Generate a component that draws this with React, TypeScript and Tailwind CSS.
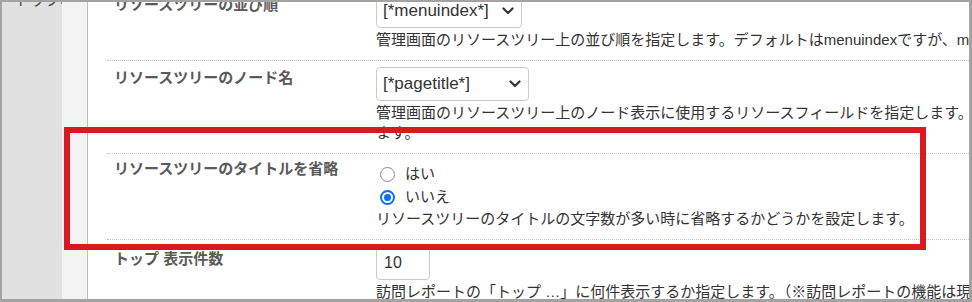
import React from 'react';

const jp = "[font-family:'Liberation_Sans','Noto_Sans_CJK_JP',sans-serif]";

const Chevron: React.FC = () => (
    <svg width="12" height="8" viewBox="0 0 12 8" fill="none" className="shrink-0">
        <path d="M1.5 1.5l4.5 4.5 4.5-4.5" stroke="#333" strokeWidth="2.2" strokeLinecap="round" strokeLinejoin="round" />
    </svg>
);

const Select: React.FC<{ value: string; width: string }> = ({ value, width }) => (
    <div className={`${width} h-[34px] flex items-center justify-between pl-[6px] pr-[7px] border border-[#cacaca] rounded-[4px] bg-white text-[17px] text-[#333]`}>
        <span>{value}</span>
        <Chevron />
    </div>
);

const Radio: React.FC<{ checked?: boolean; label: string }> = ({ checked, label }) => (
    <div className="h-[23px] flex items-center gap-[10px] pl-[4px]">
        {checked ? (
            <span className="w-[15px] h-[15px] rounded-full border-2 border-[#0b6ff0] p-[2px] bg-white">
                <span className="block w-full h-full rounded-full bg-[#0b6ff0]" />
            </span>
        ) : (
            <span className="w-[15px] h-[15px] rounded-full border-[1.5px] border-[#8a8a8a] bg-white" />
        )}
        <span className="text-[15px] text-[#333]">{label}</span>
    </div>
);

const Row: React.FC<{ label: string; children: React.ReactNode }> = ({ label, children }) => (
    <div className="flex pl-[7px] pt-[6px] pb-[10px] border-b border-dotted border-[#c8c8c8]">
        <div className="w-[262px] shrink-0 pt-[1px] text-[15px] leading-[20px] font-bold text-[#5a5a5a]">{label}</div>
        <div className="flex flex-col">{children}</div>
    </div>
);

const Desc: React.FC<{ children: React.ReactNode }> = ({ children }) => (
    <p className="mt-[2px] text-[15px] leading-[20px] text-[#333] whitespace-nowrap">{children}</p>
);

export default function App() {
    return (
        <div className={`relative w-[972px] h-[302px] overflow-hidden bg-white border-t-2 border-l-2 border-r-[3px] border-b-[3px] border-[#a3a3a3] ${jp}`}>
            <div className="flex h-full">
                {/* Sidebar */}
                <div className="w-[60px] shrink-0 bg-[#e1e1e1] overflow-hidden">
                    <div className="-mt-[12px] pl-[13px] text-[15px] leading-[20px] text-[#444] whitespace-nowrap">トップポータル</div>
                </div>
                <div className="w-[26px] shrink-0 bg-[#f3f3f3] border-r border-[#bcbcbc]" />

                {/* Settings */}
                <div className="flex-1 min-w-0 overflow-hidden">
                    <div className="ml-[19px] w-[1100px] -mt-[14px]">
                        <Row label="リソースツリーの並び順">
                            <Select value="[*menuindex*]" width="w-[146px]" />
                            <Desc>管理画面のリソースツリー上の並び順を指定します。デフォルトはmenuindexですが、menutitleなども指定できます。</Desc>
                        </Row>
                        <Row label="リソースツリーのノード名">
                            <Select value="[*pagetitle*]" width="w-[153px]" />
                            <Desc>管理画面のリソースツリー上のノード表示に使用するリソースフィールドを指定します。任意のフィールドを指定でき</Desc>
                            <p className="text-[15px] leading-[20px] text-[#333]">ます。</p>
                        </Row>
                        <div className="flex pl-[7px] pt-[5px] pb-[10px] border-b border-dotted border-[#c8c8c8]">
                            <div className="w-[262px] shrink-0 text-[15px] leading-[20px] font-bold text-[#5a5a5a]">リソースツリーのタイトルを省略</div>
                            <div className="flex flex-col pt-[4px]">
                                <Radio label="はい" />
                                <Radio checked label="いいえ" />
                                <p className="text-[15px] leading-[20px] text-[#333] whitespace-nowrap">リソースツリーのタイトルの文字数が多い時に省略するかどうかを設定します。</p>
                            </div>
                        </div>
                        <div className="flex pl-[7px] pt-[6px] pb-[10px]">
                            <div className="w-[262px] shrink-0 pt-[3px] text-[15px] leading-[20px] font-bold text-[#5a5a5a]">トップ 表示件数</div>
                            <div className="flex flex-col">
                                <div className="w-[54px] h-[34px] flex items-center pl-[7px] border border-[#cacaca] rounded-[4px] text-[16px] text-[#333]">10</div>
                                <Desc>訪問レポートの「トップ …」に何件表示するか指定します。（※訪問レポートの機能は現在開発中です）</Desc>
                            </div>
                        </div>
                    </div>
                </div>
            </div>

            {/* Highlight annotation */}
            <div className="absolute left-[62px] top-[125px] w-[862px] h-[123px] border-[6px] border-[#d71a20] z-10 pointer-events-none" />
        </div>
    );
}
